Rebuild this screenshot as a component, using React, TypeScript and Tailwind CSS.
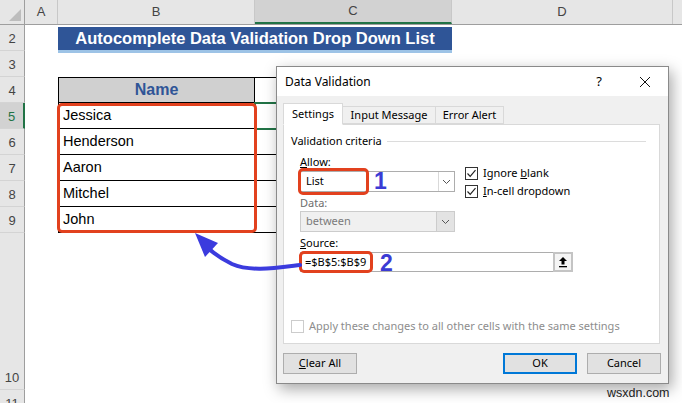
import React from 'react'

const names = ['Jessica', 'Henderson', 'Aaron', 'Mitchel', 'John']

function RowHead({ n, active, className = 'h-[26px]' }: { n: number; active?: boolean; className?: string }) {
  return (
    <div
      className={`w-[25px] shrink-0 flex items-end justify-center pb-[3px] text-[13px] leading-4 border-b border-[#d4d4d4] ${
        active ? 'bg-[#d2d2d2] border-r-2 border-r-[#217346] text-[#217346]' : 'bg-[#e6e6e6] border-r border-r-[#9e9e9e] text-[#444]'
      } ${className}`}
    >
      {n}
    </div>
  )
}

function Chevron() {
  return (
    <svg width="9" height="6" viewBox="0 0 9 6">
      <polyline points="1,1 4.5,4.5 8,1" fill="none" stroke="#555" strokeWidth="1" />
    </svg>
  )
}

function Check() {
  return (
    <div className="w-[13px] h-[13px] border border-[#333] bg-white flex items-center justify-center">
      <svg width="11" height="11" viewBox="0 0 11 11">
        <polyline points="1.5,5.5 4.2,8.3 9.5,2.2" fill="none" stroke="#222" strokeWidth="1.2" />
      </svg>
    </div>
  )
}

function Dialog() {
  return (
    <div className="absolute left-[276px] top-[66px] w-[393px] h-[318px] border border-[#8a8a8a] bg-[#f0f0f0] shadow-[3px_5px_14px_rgba(0,0,0,0.35)] flex flex-col font-['Noto_Sans',sans-serif] text-[11px] text-black">
      {/* title bar */}
      <div className="h-[29px] bg-white flex items-center shrink-0">
        <div className="flex-1 pl-[8px] text-[12px]">Data Validation</div>
        <div className="w-[46px] text-center text-[13px]">?</div>
        <div className="w-[46px] flex justify-center">
          <svg width="12" height="12" viewBox="0 0 12 12">
            <path d="M1 1 L11 11 M11 1 L1 11" stroke="#111" strokeWidth="1" />
          </svg>
        </div>
      </div>

      <div className="flex-1 flex flex-col px-[6px] pt-[7px]">
        {/* tabs */}
        <div className="flex items-end h-[21px] relative z-10">
          <div className="w-[60px] h-[22px] mb-[-1px] bg-white border border-[#d9d9d9] border-b-white flex items-center justify-center">
            Settings
          </div>
          <div className="w-[93px] h-[18px] bg-[#f0f0f0] border border-[#d9d9d9] border-l-0 flex items-center justify-center">
            Input Message
          </div>
          <div className="w-[68px] h-[18px] bg-[#f0f0f0] border border-[#d9d9d9] border-l-0 flex items-center justify-center">
            Error Alert
          </div>
        </div>

        {/* panel */}
        <div className="relative w-[377px] h-[220px] bg-white border border-[#d9d9d9] flex flex-col px-[7px] pt-[8px] pb-[10px]">
          <div className="h-[16px] flex items-center gap-[5px]">
            <span>Validation criteria</span>
            <div className="flex-1 h-px bg-[#dcdcdc] mr-[6px]" />
          </div>

          <div className="flex">
            <div className="ml-[9px] w-[155px] flex flex-col">
              <div className="mt-[5px] h-[16px] leading-4">
                <u>A</u>llow:
              </div>
              <div className="mt-[1px] h-[21px] border border-[#adadad] bg-white flex items-center">
                <span className="flex-1 pl-[5px]">List</span>
                <div className="w-[16px] h-full border-l border-[#d9d9d9] flex items-center justify-center">
                  <Chevron />
                </div>
              </div>
              <div className="mt-[3px] h-[16px] leading-4 text-[#6d6d6d]">Data:</div>
              <div className="h-[21px] border border-[#cccccc] bg-[#f0f0f0] flex items-center text-[#7a7a7a]">
                <span className="flex-1 pl-[5px]">between</span>
                <div className="w-[18px] h-full bg-[#e3e3e3] border-l border-[#cccccc] flex items-center justify-center">
                  <Chevron />
                </div>
              </div>
            </div>
            <div className="ml-[10px] mt-[15px] flex flex-col">
              <div className="h-[18px] flex items-center gap-[5px]">
                <Check />
                <span>
                  Ignore <u>b</u>lank
                </span>
              </div>
              <div className="h-[18px] flex items-center gap-[5px]">
                <Check />
                <span>
                  <u>I</u>n-cell dropdown
                </span>
              </div>
            </div>
          </div>

          <div className="ml-[9px] mt-[3px] h-[16px] leading-4">
            <u>S</u>ource:
          </div>
          <div className="ml-[9px] mt-[1px] w-[273px] h-[20px] border border-[#adadad] bg-white flex items-center">
            <span className="flex-1 pl-[4px]">=$B$5:$B$9</span>
            <div className="w-[20px] h-[20px] mr-[-1px] border-2 border-[#c4c4c4] bg-[#f5f5f5] flex items-center justify-center">
              <svg width="10" height="12" viewBox="0 0 10 12">
                <path d="M5 1 L9 5 L6.5 5 L6.5 8.5 L3.5 8.5 L3.5 5 L1 5 Z" fill="#000" />
                <rect x="1" y="10" width="8" height="1.3" fill="#000" />
              </svg>
            </div>
          </div>

          <div className="mt-auto h-[14px] flex items-center gap-[5px] text-[#8d8d8d]">
            <div className="w-[13px] h-[13px] border border-[#cccccc] bg-white" />
            <span>Apply these changes to all other cells with the same settings</span>
          </div>

          {/* annotations */}
          <div className="absolute left-[14px] top-[43px] w-[71px] h-[27px] border-[3px] border-[#e2411e] rounded-[5px]" />
          <div className="absolute left-[90px] top-[42px] text-[23px] leading-[28px] font-bold text-[#3b3bd4] font-['Liberation_Sans',sans-serif]">
            1
          </div>
          <div className="absolute left-[15px] top-[126px] w-[74px] h-[22px] border-[3px] border-[#e2411e] rounded-[5px]" />
          <div className="absolute left-[96px] top-[124px] text-[23px] leading-[28px] font-bold text-[#3b3bd4] font-['Liberation_Sans',sans-serif]">
            2
          </div>
        </div>

        {/* buttons */}
        <div className="flex mt-[9px] pr-[1px]">
          <div className="w-[74px] h-[21px] bg-[#e1e1e1] border border-[#adadad] flex items-center justify-center">
            <span>
              <u>C</u>lear All
            </span>
          </div>
          <div className="flex-1" />
          <div className="w-[74px] h-[21px] bg-[#e1e1e1] border-2 border-[#0078d7] flex items-center justify-center">OK</div>
          <div className="w-[74px] h-[21px] ml-[10px] bg-[#e1e1e1] border border-[#adadad] flex items-center justify-center">
            Cancel
          </div>
        </div>
      </div>
    </div>
  )
}

export default function App() {
  return (
    <div className="relative w-[682px] h-[403px] overflow-hidden bg-white font-['Liberation_Sans',Arial,sans-serif]">
      {/* column headers */}
      <div className="flex h-[25px] bg-[#e6e6e6] border-b border-[#9e9e9e] text-[13px] text-[#444]">
        <div className="w-[25px] shrink-0 border-r border-[#9e9e9e] flex items-end justify-end p-[3px]">
          <svg width="12" height="12" viewBox="0 0 12 12">
            <polygon points="12,0 12,12 0,12" fill="#bdbdbd" />
          </svg>
        </div>
        <div className="w-[33px] shrink-0 border-r border-[#c8c8c8] flex items-center justify-center">A</div>
        <div className="w-[197px] shrink-0 border-r border-[#c8c8c8] flex items-center justify-center">B</div>
        <div className="w-[197px] shrink-0 bg-[#d2d2d2] border-r border-[#c8c8c8] border-b-2 border-b-[#217346] flex items-center justify-center">
          C
        </div>
        <div className="w-[221px] shrink-0 border-r border-[#c8c8c8] flex items-center justify-center">D</div>
        <div className="flex-1" />
      </div>

      {/* row 2 */}
      <div className="flex h-[26px]">
        <RowHead n={2} />
        <div className="w-[33px] shrink-0" />
        <div className="w-[394px] shrink-0 pt-[2px]">
          <div className="h-[23px] bg-[#2f5597] text-white font-bold text-[16.5px] flex items-center justify-center">
            Autocomplete Data Validation Drop Down List
          </div>
          <div className="h-[3px] bg-[#9dc3e6]" />
        </div>
      </div>

      {/* row 3 */}
      <div className="flex h-[26px]">
        <RowHead n={3} />
      </div>

      {/* row 4 */}
      <div className="flex h-[26px]">
        <RowHead n={4} />
        <div className="w-[33px] shrink-0" />
        <div className="w-[197px] shrink-0 bg-[#d0d0d0] border border-black flex items-center justify-center font-bold text-[16px] text-[#2f5597]">
          Name
        </div>
        <div className="w-[197px] shrink-0 border-t border-r border-b border-black" />
      </div>

      {/* rows 5-9 */}
      {names.map((name, i) => (
        <div key={name} className="flex h-[26px]">
          <RowHead n={5 + i} active={i === 0} />
          <div className="w-[33px] shrink-0" />
          <div className="w-[197px] shrink-0 border-l border-r border-b border-black flex items-center pl-[4px] text-[14.5px] text-black">
            {name}
          </div>
          <div className="w-[197px] shrink-0 border-r border-b border-black" />
        </div>
      ))}

      {/* row 10, 11 */}
      <div className="flex h-[157px]">
        <RowHead n={10} className="h-[157px]" />
      </div>
      <div className="flex h-[26px]">
        <RowHead n={11} />
      </div>

      {/* selected cell C5 */}
      <div className="absolute left-[254px] top-[102px] w-[199px] h-[28px] border-2 border-[#217346]" />

      {/* red box around names */}
      <div className="absolute left-[57px] top-[103px] w-[200px] h-[130px] border-[3px] border-[#e2411e] rounded-[5px]" />

      <Dialog />

      {/* arrow */}
      <svg className="absolute left-0 top-0 pointer-events-none" width="682" height="403" viewBox="0 0 682 403">
        <path d="M300 265 C 275 268, 250 272, 232 264 C 222 259, 214 254, 207 247" fill="none" stroke="#3b3bde" strokeWidth="4" strokeLinecap="round" />
        <polygon points="195,233 218,243 205,257" fill="#3b3bde" />
      </svg>

      <div className="absolute left-[607px] top-[384px] text-[12.5px] text-[#222]">wsxdn.com</div>
    </div>
  )
}
